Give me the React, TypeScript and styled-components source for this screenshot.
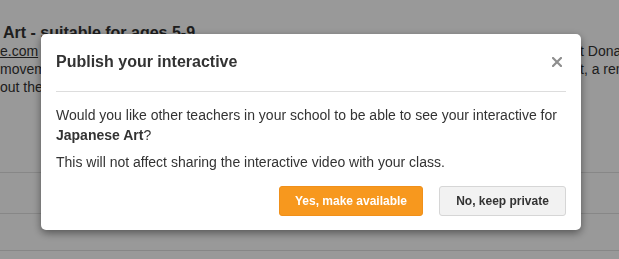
import React from 'react';
import styled, { createGlobalStyle } from 'styled-components';

const GlobalStyle = createGlobalStyle`
  html, body {
    margin: 0;
    padding: 0;
    background: #ffffff;
    font-family: "Liberation Sans", Arial, sans-serif;
    color: #333333;
  }
`;

// Page underneath the dialog
const Page = styled.div`
  width: 619px;
  height: 259px;
  overflow: hidden;
  padding-top: 24px;
  box-sizing: border-box;
`;

const LessonTitle = styled.h2`
  margin: 0 0 0 3px;
  font-size: 16px;
  font-weight: bold;
  line-height: 18px;
  white-space: nowrap;
`;

const TextLine = styled.div`
  display: grid;
  grid-template-columns: 580px auto;
  font-size: 14px;
  line-height: 18px;
  white-space: nowrap;
`;

const Clip = styled.span`
  overflow: hidden;
`;

const Link = styled.span`
  text-decoration: underline;
`;

const List = styled.div`
  margin-top: 76px;
`;

const ListRow = styled.div<{ $h: number }>`
  height: ${(p) => p.$h}px;
  border-top: 1px solid #e2e2e2;
`;

// Dialog
const Backdrop = styled.div`
  position: fixed;
  inset: 0;
  background: rgba(0, 0, 0, 0.4);
`;

const Dialog = styled.div`
  position: fixed;
  top: 34px;
  left: 41px;
  width: 540px;
  background: #ffffff;
  border-radius: 5px;
  box-shadow: 0 3px 9px rgba(0, 0, 0, 0.45);
  padding: 0 15px 14px;
  box-sizing: border-box;
`;

const Header = styled.div`
  display: flex;
  align-items: center;
  justify-content: space-between;
  padding: 15px 0 16px;
  border-bottom: 1px solid #dddddd;
`;

const Title = styled.h3`
  margin: 0;
  font-size: 16px;
  font-weight: bold;
  line-height: 26px;
  color: #333333;
`;

const CloseButton = styled.button`
  display: flex;
  align-items: center;
  justify-content: center;
  width: 12px;
  height: 12px;
  margin-right: 3px;
  padding: 0;
  border: 0;
  background: none;
  cursor: pointer;
`;

const Body = styled.div`
  padding-top: 13px;
  font-size: 14px;
  line-height: 20px;
  color: #333333;
`;

const Para = styled.p<{ $gap?: number }>`
  margin: 0 0 ${(p) => p.$gap ?? 0}px;
`;

const Footer = styled.div`
  display: flex;
  justify-content: flex-end;
  gap: 16px;
  margin-top: 14px;
`;

const Button = styled.button<{ $primary?: boolean; $w: number }>`
  width: ${(p) => p.$w}px;
  height: 30px;
  padding: 0;
  border-radius: 3px;
  border: 1px solid ${(p) => (p.$primary ? '#f0901a' : '#d6d6d6')};
  background: ${(p) => (p.$primary ? '#f7981e' : '#f2f2f2')};
  color: ${(p) => (p.$primary ? '#ffffff' : '#333333')};
  font-family: "Liberation Sans", Arial, sans-serif;
  font-size: 12px;
  font-weight: bold;
  cursor: pointer;
`;

const CloseIcon = () => (
  <svg width="10" height="10" viewBox="0 0 10 10">
    <path d="M1 1 L9 9 M9 1 L1 9" stroke="#8e8e8e" strokeWidth="2.2" strokeLinecap="square" />
  </svg>
);

export default function App() {
  return (
    <>
      <GlobalStyle />
      <Page>
        <LessonTitle>Art - suitable for ages 5-9</LessonTitle>
        <TextLine>
          <Clip>
            <Link>e.com</Link> Watch this short film about traditional Japanese painting and the artists behind it, then
          </Clip>
          <span>t Donald</span>
        </TextLine>
        <TextLine>
          <Clip>movements of the brush and how the artists used ink, paper and silk to create their work of art</Clip>
          <span>t, a remarkable</span>
        </TextLine>
        <TextLine>
          <Clip>out the history of woodblock prints and the famous wave picture.</Clip>
          <span></span>
        </TextLine>
        <List>
          <ListRow $h={40} />
          <ListRow $h={36} />
          <ListRow $h={20} />
        </List>
      </Page>
      <Backdrop />
      <Dialog role="dialog">
        <Header>
          <Title>Publish your interactive</Title>
          <CloseButton aria-label="Close">
            <CloseIcon />
          </CloseButton>
        </Header>
        <Body>
          <Para $gap={7}>
            Would you like other teachers in your school to be able to see your interactive for{' '}
            <strong>Japanese Art</strong>?
          </Para>
          <Para>This will not affect sharing the interactive video with your class.</Para>
        </Body>
        <Footer>
          <Button $primary $w={144}>Yes, make available</Button>
          <Button $w={127}>No, keep private</Button>
        </Footer>
      </Dialog>
    </>
  );
}
